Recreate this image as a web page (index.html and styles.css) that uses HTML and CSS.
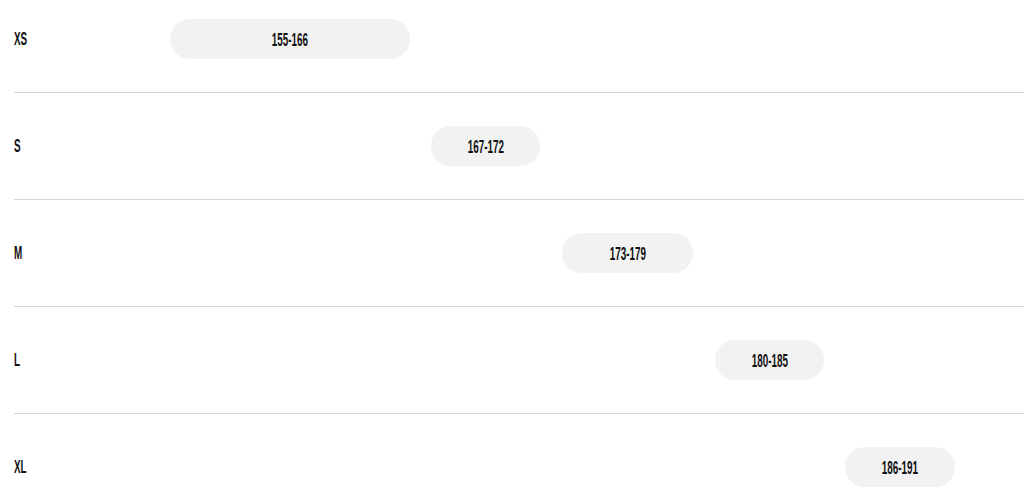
FILE: index.html
```html
<!DOCTYPE html>
<html lang="en">
<head>
<meta charset="utf-8">
<title>Size chart</title>
<link rel="stylesheet" href="styles.css">
</head>
<body>
<div class="chart">
  <div class="row first">
    <div class="label"><span class="cond">XS</span></div>
    <div class="track"><div class="pill" style="margin-left:0px;width:240px"><span class="cond">155-166</span></div></div>
  </div>
  <div class="row">
    <div class="label"><span class="cond">S</span></div>
    <div class="track"><div class="pill" style="margin-left:261px;width:109px"><span class="cond">167-172</span></div></div>
  </div>
  <div class="row">
    <div class="label"><span class="cond">M</span></div>
    <div class="track"><div class="pill" style="margin-left:392px;width:131px"><span class="cond">173-179</span></div></div>
  </div>
  <div class="row">
    <div class="label"><span class="cond">L</span></div>
    <div class="track"><div class="pill" style="margin-left:545px;width:109px"><span class="cond">180-185</span></div></div>
  </div>
  <div class="row last">
    <div class="label"><span class="cond">XL</span></div>
    <div class="track"><div class="pill" style="margin-left:675px;width:110px"><span class="cond">186-191</span></div></div>
  </div>
</div>
</body>
</html>
```
FILE: styles.css
```css
html, body {
  margin: 0;
  padding: 0;
  background: #ffffff;
}
body {
  font-family: "Liberation Sans", Arial, sans-serif;
  color: #111111;
  overflow: hidden;
}
.chart {
  margin-left: 14px;
}
.row {
  display: flex;
  align-items: center;
  padding: 33px 0;
  border-bottom: 1px solid #d6d6d6;
}
.row.first {
  padding-top: 19px;
}
.row.last {
  border-bottom: none;
  padding-bottom: 0;
}
.label {
  width: 156px;
  flex: none;
  font-size: 19px;
  font-weight: 700;
  line-height: 40px;
  height: 40px;
}
.label .cond {
  transform-origin: left center;
}
.track {
  flex: 1;
  display: flex;
}
.pill {
  height: 40px;
  border-radius: 20px;
  background: #f2f2f2;
  display: flex;
  align-items: center;
  justify-content: center;
  font-size: 19px;
  font-weight: 700;
  flex: none;
}
.cond {
  display: inline-block;
  transform: scaleX(0.52);
  line-height: 1;
}
.pill .cond {
  transform-origin: center center;
}
```
